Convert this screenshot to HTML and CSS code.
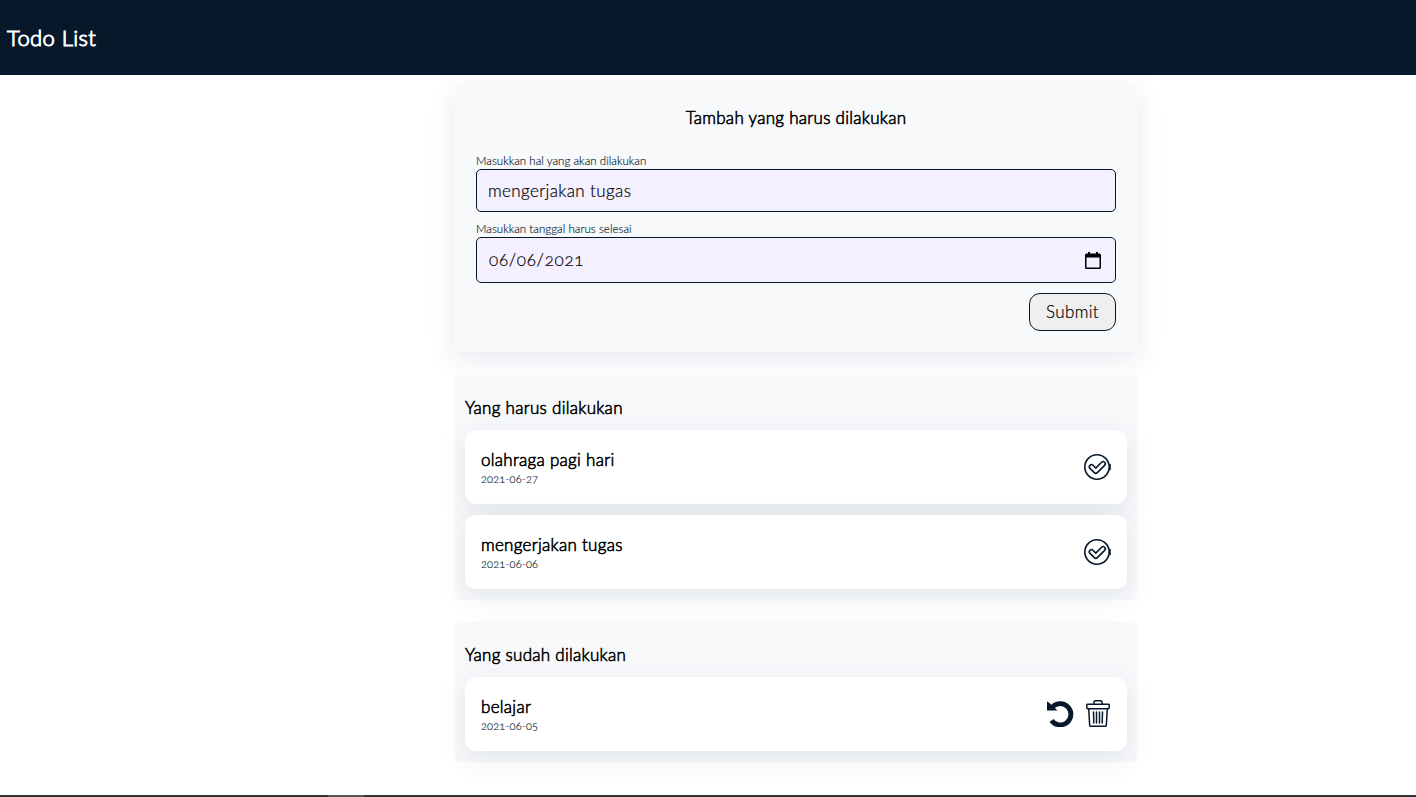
FILE: index.html
```html
<!DOCTYPE html>
<html lang="id">
<head>
<meta charset="utf-8">
<title>Todo List</title>
<link rel="stylesheet" href="styles.css">
</head>
<body>
<header class="navbar"><h1>Todo List</h1></header>
<main class="wrapper">
  <form class="card form-card">
    <h2 class="form-title">Tambah yang harus dilakukan</h2>
    <label class="label">Masukkan hal yang akan dilakukan</label>
    <div class="field field-text">mengerjakan tugas</div>
    <label class="label label-date">Masukkan tanggal harus selesai</label>
    <div class="field field-date"><span>06/06/2021</span>
      <svg class="calendar" width="16" height="17" viewBox="0 0 16 17"><path d="M3 0h2v1.5h6V0h2v1.5h1.5Q16 1.500 16 3v12.500Q16 17 14.500 17h-13Q0 17 0 15.500V3Q0 1.500 1.500 1.500H3zM1.500 5.500v10h13v-10z" fill="#000" fill-rule="evenodd"/></svg>
    </div>
    <button class="submit" type="button">Submit</button>
  </form>

  <section class="card list-card">
    <h2 class="list-title">Yang harus dilakukan</h2>
    <article class="item">
      <div><h3 class="task">olahraga pagi hari</h3><p class="date">2021-06-27</p></div>
      <svg class="check" width="27" height="26" viewBox="0 0 27 26"><use href="#check"/></svg>
    </article>
    <article class="item">
      <div><h3 class="task">mengerjakan tugas</h3><p class="date">2021-06-06</p></div>
      <svg class="check" width="27" height="26" viewBox="0 0 27 26">
        <g id="check" fill="none" stroke-linecap="round" stroke-linejoin="round">
          <circle cx="13" cy="13" r="12.200" stroke="#07182a" stroke-width="1.600"/>
          <path d="M26 10.500v5" stroke="#07182a" stroke-width="1.600"/>
          <path d="M7.500 12.800l4.300 4.300 7.300-7.300" stroke="#07182a" stroke-width="5.900"/>
          <path d="M7.500 12.800l4.300 4.300 7.300-7.300" stroke="#fff" stroke-width="2.700"/>
        </g>
      </svg>
    </article>
  </section>

  <section class="card list-card done">
    <h2 class="list-title">Yang sudah dilakukan</h2>
    <article class="item">
      <div><h3 class="task">belajar</h3><p class="date">2021-06-05</p></div>
      <div class="actions">
        <svg width="27" height="27" viewBox="0 0 27 27"><path d="M5.500 6.800A10.700 10.700 0 1 1 4.500 20.500" fill="none" stroke="#07182a" stroke-width="4.800"/><path d="M0 1.200l3 2.300 7.500 7H0z" fill="#07182a"/></svg>
        <svg width="24" height="27" viewBox="0 0 24 27" fill="none" stroke="#07182a" stroke-width="1.500" stroke-linejoin="round" stroke-linecap="round"><path d="M8 4V2q0-1.200 1.200-1.200h5.600Q16 .8 16 2v2M1.500 4.300h21q.7 0 .7.700v3q0 .7-.7.7h-21q-.7 0-.7-.7V5q0-.7.700-.7zM2.700 8.500l1 17q.1.800.8.800h15q.7 0 .8-.8l1-17M7.500 12l.3 11M10.500 12v11M13.500 12v11M16.500 12l-.3 11"/></svg>
      </div>
    </article>
  </section>
</main>
<footer class="scrollbar"><div class="thumb"></div></footer>
</body>
</html>
```
FILE: styles.css
```css
* { box-sizing: border-box; margin: 0; padding: 0; }
body {
  height: 797px;
  overflow: hidden;
  display: flex;
  flex-direction: column;
  background: #fff;
  color: #000;
  font-family: Lato, "Open Sans", sans-serif;
  font-weight: 300;
  font-variant-numeric: oldstyle-nums;
}
.navbar {
  height: 75px;
  flex: none;
  padding: 0 7px;
  display: flex;
  align-items: center;
  background: #07182a;
  color: #fff;
}
h1, h2, h3 {
  font-weight: 300;
  -webkit-text-stroke: 0.6px currentColor;
  white-space: nowrap;
}
h1 { font-size: 22px; line-height: 28px; letter-spacing: 0.4px; -webkit-text-stroke-width: 1px; }
.wrapper { flex: 1; width: 682px; margin: 10px 0 0 455px; }
.card { border-radius: 5px; background: #f8f9fb; }
.form-card {
  height: 267px;
  padding: 22px 21px 0;
  display: flex;
  flex-direction: column;
  box-shadow: 0 7px 29px rgba(20, 40, 100, 0.1);
}
.form-title, .list-title, .task { font-size: 17px; line-height: 22px; letter-spacing: 0.28px; }
.form-title { text-align: center; margin-bottom: 25px; }
.label { font-size: 11.5px; line-height: 14px; color: #07182a; letter-spacing: 0.04px; margin-bottom: 1px; -webkit-text-stroke: 0.15px; }
.label-date { margin-top: 10px; }
.field {
  border: 1px solid #07182a;
  border-radius: 5px;
  background: #f5f0ff;
  font-size: 17px;
  display: flex;
  align-items: center;
  padding: 0 14px 0 11px;
  -webkit-text-stroke: 0.2px;
}
.field-text { height: 43px; letter-spacing: 0.37px; padding-bottom: 1px; }
.field-date { height: 46px; letter-spacing: 0.7px; justify-content: space-between; padding-left: 12px; }
.field-date span { padding-bottom: 2px; }
.submit {
  align-self: flex-end;
  width: 87px;
  height: 38px;
  margin-top: 10px;
  padding-bottom: 1px;
  border: 1px solid #07182a;
  border-radius: 11px;
  background: #efefef;
  color: #000;
  font: inherit;
  font-size: 17px;
  letter-spacing: 0.35px;
  -webkit-text-stroke: 0.2px;
}
.list-card { height: 226px; margin-top: 22px; padding: 23px 10px 0; }
.list-card.done { height: 141px; margin-top: 21px; }
.list-title { margin-bottom: 11px; }
.item {
  height: 74px;
  margin-bottom: 11px;
  padding: 0 16px;
  display: flex;
  align-items: center;
  justify-content: space-between;
  border-radius: 11px;
  background: #fff;
  box-shadow: 0 7px 29px rgba(20, 50, 90, 0.1);
}
.date { font-size: 11px; line-height: 15px; letter-spacing: 0.15px; color: #07182a; -webkit-text-stroke: 0.15px; }
.actions { display: flex; gap: 12px; margin: 0 1px 1px 0; }
.scrollbar { height: 2px; flex: none; background: #333; padding-left: 328px; }
.thumb { width: 36px; height: 2px; background: #555; }
```
